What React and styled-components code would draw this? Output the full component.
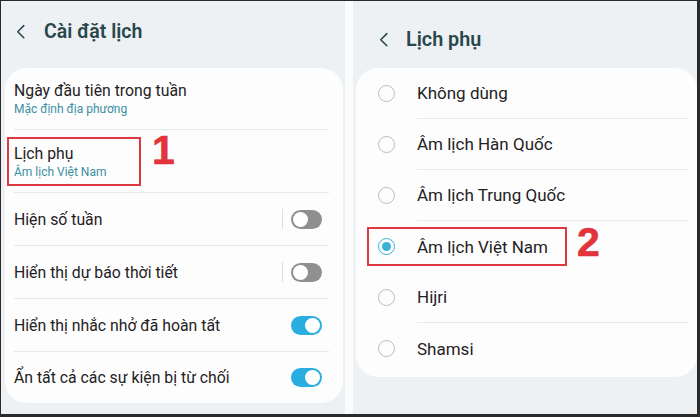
import React from 'react';
import styled, { createGlobalStyle } from 'styled-components';

const GlobalStyle = createGlobalStyle`
  html, body { margin: 0; padding: 0; }
  body { font-family: Roboto, "Noto Sans", "Liberation Sans", sans-serif; }
`;

const Frame = styled.div`
  width: 700px;
  height: 417px;
  box-sizing: border-box;
  background: #2a2a2a;
  padding: 1px 3px 3px 1px;
  display: flex;
`;

const Panel = styled.div`
  width: ${(p) => p.width}px;
  height: 100%;
  background: #eef1f4;
  display: flex;
  flex-direction: column;
  padding: 0 ${(p) => p.padRight}px 0 ${(p) => p.padLeft}px;
  box-sizing: border-box;
`;

const Gap = styled.div`
  width: 8px;
  background: #fbfcfd;
`;

const Header = styled.div`
  height: 67px;
  display: flex;
  align-items: center;
  gap: ${(p) => p.gap}px;
  padding: ${(p) => p.pad};
  box-sizing: border-box;
  color: #28474c;
`;

const Title = styled.div`
  font-size: ${(p) => p.size}px;
  font-weight: 600;
`;

const Card = styled.div`
  background: #fdfdfd;
  border-radius: 22px;
  display: flex;
  flex-direction: column;
  padding-bottom: ${(p) => p.padBottom || 0}px;
`;

const Row = styled.div`
  height: ${(p) => p.h}px;
  display: flex;
  align-items: center;
  border-bottom: ${(p) => (p.last ? 'none' : '1px solid #e6e8ea')};
  margin: 0 ${(p) => (p.last ? 0 : 14)}px 0 ${(p) => (p.last ? 0 : 9)}px;
  padding-left: ${(p) => (p.last ? 9 : 0)}px;
  padding-right: ${(p) => (p.last ? 21 : 7)}px;
  box-sizing: border-box;
`;

const TextBlock = styled.div`
  display: flex;
  flex-direction: column;
  flex: 1;
  gap: 2px;
`;

const Label = styled.div`
  font-size: 15.8px;
  color: #1f2224;
`;

const Sub = styled.div`
  font-size: 12px;
  color: #3b8fa3;
`;

const Highlight = styled.div`
  display: flex;
  flex-direction: column;
  gap: 2px;
  border: 2px solid #dc3a40;
  margin-left: ${(p) => p.shift}px;
  padding: ${(p) => p.pad};
  box-sizing: border-box;
  height: ${(p) => p.h}px;
  width: ${(p) => p.w}px;
  justify-content: center;
`;

const Step = styled.div`
  color: #e3333b;
  font-family: "Liberation Sans", Arial, sans-serif;
  font-weight: 700;
  font-size: 41px;
  line-height: 1;
  margin-left: ${(p) => p.gap}px;
  align-self: flex-start;
  margin-top: ${(p) => p.top}px;
  -webkit-text-stroke: 0.6px #e3333b;
`;

const Divider = styled.div`
  width: 1px;
  height: 20px;
  background: #dcdee0;
  margin-right: 8px;
`;

const Track = styled.div`
  width: 31px;
  height: 19px;
  border-radius: 10px;
  background: ${(p) => (p.on ? '#2aaee0' : '#8d8f91')};
  display: flex;
  align-items: center;
  justify-content: ${(p) => (p.on ? 'flex-end' : 'flex-start')};
  padding: 0 2px;
  box-sizing: border-box;
`;

const Knob = styled.div`
  width: 15px;
  height: 15px;
  border-radius: 50%;
  background: #ffffff;
`;

const RadioRow = styled.div`
  height: 51px;
  display: flex;
  align-items: center;
  padding-left: 22px;
`;

const Radio = styled.div`
  width: 17px;
  height: 17px;
  border-radius: 50%;
  box-sizing: border-box;
  border: 1.5px solid ${(p) => (p.checked ? '#3ab2d6' : '#b9bcbe')};
  display: flex;
  align-items: center;
  justify-content: center;
  flex-shrink: 0;
  &::after {
    content: '';
    display: ${(p) => (p.checked ? 'block' : 'none')};
    width: 9px;
    height: 9px;
    border-radius: 50%;
    background: #3ab2d6;
  }
`;

const RadioBody = styled.div`
  flex: 1;
  height: 100%;
  margin-left: 22px;
  margin-right: 8px;
  display: flex;
  align-items: center;
  border-bottom: ${(p) => (p.last ? 'none' : '1px solid #e6e8ea')};
  box-sizing: border-box;
`;

const RadioLabel = styled.div`
  font-size: 17px;
  color: #1f2224;
  margin-left: ${(p) => p.indent || 0}px;
`;

const RadioSelected = styled.div`
  display: flex;
  align-items: center;
  border: 2px solid #dc3a40;
  width: 200px;
  height: 39px;
  box-sizing: border-box;
  margin-left: -11px;
  padding-left: 9px;
`;

const Chevron = ({ size }) => (
  <svg width={size} height={size * 1.4} viewBox="0 0 10 14" fill="none">
    <path d="M8 1.5 L2.5 7 L8 12.5" stroke="#28474c" strokeWidth="1.4" strokeLinecap="round" strokeLinejoin="round" />
  </svg>
);

function Toggle({ on }) {
  return (
    <>
      {!on && <Divider />}
      <Track on={on ? 1 : 0}>
        <Knob />
      </Track>
    </>
  );
}

const toggles = [
  { label: 'Hiện số tuần', on: false },
  { label: 'Hiển thị dự báo thời tiết', on: false },
  { label: 'Hiển thị nhắc nhở đã hoàn tất', on: true },
  { label: 'Ẩn tất cả các sự kiện bị từ chối', on: true },
];

const options = ['Không dùng', 'Âm lịch Hàn Quốc', 'Âm lịch Trung Quốc', 'Âm lịch Việt Nam', 'Hijri', 'Shamsi'];

export default function App() {
  return (
    <Frame>
      <GlobalStyle />
      <Panel width={344} padLeft={4} padRight={2}>
        <Header pad="0 0 6px 10px" gap={18}>
          <Chevron size={11} />
          <Title size={19.5}>Cài đặt lịch</Title>
        </Header>
        <Card>
          <Row h={62}>
            <TextBlock>
              <Label>Ngày đầu tiên trong tuần</Label>
              <Sub>Mặc định địa phương</Sub>
            </TextBlock>
          </Row>
          <Row h={63}>
            <Highlight shift={-7} pad="0 0 0 5px" h={49} w={134}>
              <Label>Lịch phụ</Label>
              <Sub>Âm lịch Việt Nam</Sub>
            </Highlight>
            <Step gap={11} top={0}>1</Step>
          </Row>
          {toggles.map((t, i) => (
            <Row key={t.label} h={i === 3 ? 51 : 53} last={i === 3 ? 1 : 0}>
              <TextBlock>
                <Label>{t.label}</Label>
              </TextBlock>
              <Toggle on={t.on} />
            </Row>
          ))}
        </Card>
      </Panel>
      <Gap />
      <Panel width={344} padLeft={3} padRight={0}>
        <Header pad="10px 0 0 22px" gap={17}>
          <Chevron size={11} />
          <Title size={19.8}>Lịch phụ</Title>
        </Header>
        <Card padBottom={3}>
          {options.map((o, i) => {
            const checked = o === 'Âm lịch Việt Nam';
            return (
              <RadioRow key={o}>
                {checked ? (
                  <RadioSelected>
                    <Radio checked />
                    <RadioLabel indent={22}>{o}</RadioLabel>
                  </RadioSelected>
                ) : (
                  <Radio />
                )}
                {checked ? (
                  <Step gap={10} top={1}>2</Step>
                ) : (
                  <RadioBody last={i === options.length - 1 ? 1 : 0}>
                    <RadioLabel>{o}</RadioLabel>
                  </RadioBody>
                )}
              </RadioRow>
            );
          })}
        </Card>
      </Panel>
    </Frame>
  );
}
